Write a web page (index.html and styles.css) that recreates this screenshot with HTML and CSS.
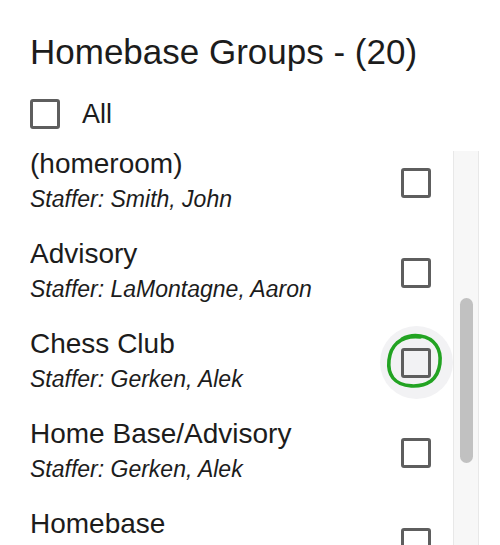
FILE: index.html
```html
<!DOCTYPE html>
<html lang="en">
<head>
  <meta charset="UTF-8">
  <title>Homebase Groups</title>
  <meta name="viewport" content="width=device-width, initial-scale=1.0">
  <link rel="stylesheet" href="styles.css">
</head>
<body>
  <div class="panel">
    <h2>Homebase Groups - (20)</h2>

    <label class="all">
      <span class="box"></span>
      <span>All</span>
    </label>

    <div class="list">
      <div class="viewport">
        <div class="rows">
          <div class="row">
            <div class="info">
              <div class="name">(homeroom)</div>
              <div class="staffer">Staffer: Smith, John</div>
            </div>
            <span class="box"></span>
          </div>
          <div class="row">
            <div class="info">
              <div class="name">Advisory</div>
              <div class="staffer">Staffer: LaMontagne, Aaron</div>
            </div>
            <span class="box"></span>
          </div>
          <div class="row">
            <div class="info">
              <div class="name">Chess Club</div>
              <div class="staffer">Staffer: Gerken, Alek</div>
            </div>
            <span class="spot">
              <span class="box"></span>
              <svg class="mark" width="64" height="64" viewBox="0 0 64 64">
                <path d="M19 8 C 30 2, 46 4, 53 14 C 60 24, 58 42, 48 50 C 38 57, 18 57, 10 47 C 3 38, 5 20, 14 12 C 20 7, 28 5, 37 6"
                      fill="none" stroke="#22a322" stroke-width="3.6" stroke-linecap="round"/>
              </svg>
            </span>
          </div>
          <div class="row">
            <div class="info">
              <div class="name">Home Base/Advisory</div>
              <div class="staffer">Staffer: Gerken, Alek</div>
            </div>
            <span class="box"></span>
          </div>
          <div class="row">
            <div class="info">
              <div class="name">Homebase</div>
              <div class="staffer">Staffer: Gerken, Alek</div>
            </div>
            <span class="box"></span>
          </div>
        </div>
      </div>
      <div class="track">
        <div class="thumb"></div>
      </div>
    </div>
  </div>
</body>
</html>
```

FILE: styles.css
```css
* { box-sizing: border-box; margin: 0; padding: 0; }
html, body {
  width: 100%; height: 100%;
  font-family: 'Liberation Sans', Arial, sans-serif;
  background-color: #ffffff;
  color: #1c1c1c;
  overflow: hidden;
}
.panel {
  padding: 32px 21px 0 30px;
  height: 545px;
  display: flex;
  flex-direction: column;
}
h2 {
  font-size: 35px;
  font-weight: normal;
  line-height: 40px;
}
.box {
  flex: none;
  display: block;
  width: 30px;
  height: 30px;
  border: 3px solid #5e5e5e;
  border-radius: 3px;
}
.all {
  display: flex;
  align-items: center;
  gap: 22px;
  margin-top: 27px;
  font-size: 27px;
  line-height: 30px;
}
.list {
  flex: 1;
  display: flex;
  margin-top: 19px;
  min-height: 0;
}
.viewport {
  flex: 1;
  overflow: hidden;
}
.rows {
  margin-top: -9px;  /* list is scrolled a bit */
}
.row {
  display: flex;
  align-items: center;
  justify-content: space-between;
  padding: 12px 22px 15px 0;
}
.name {
  font-size: 28px;
  line-height: 26px;
}
.staffer {
  margin-top: 7px;
  font-size: 23px;
  line-height: 30px;
  font-style: italic;
}
.spot {
  position: relative;
  z-index: 0;
}
.spot::before {
  content: "";
  position: absolute;
  left: 50%; top: 50%;
  width: 73px; height: 73px;
  margin: -36.5px 0 0 -36.5px;
  border-radius: 50%;
  background-color: #f2f2f4;
  z-index: -1;
}
.mark {
  position: absolute;
  left: -18px;
  top: -17px;
}
.track {
  width: 26px;
  margin-top: 3px;
  background-color: #f7f7f7;
  border-left: 1px solid #e8e8e8;
  border-right: 1px solid #e8e8e8;
  padding: 147px 5px 0 6px;
}
.thumb {
  width: 13px;
  height: 165px;
  border-radius: 7px;
  background-color: #c1c1c1;
}
```
